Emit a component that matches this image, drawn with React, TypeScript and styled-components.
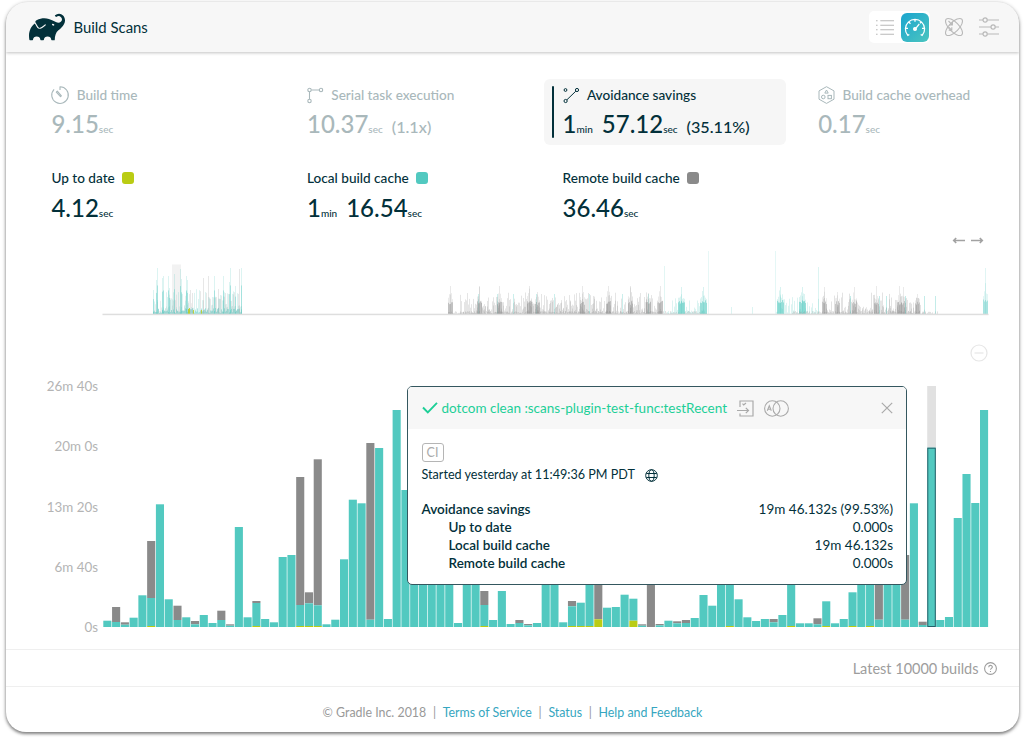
import React from 'react';
import styled, { createGlobalStyle, css } from 'styled-components';
import { SiGradle } from 'react-icons/si';

const ink = '#02303a';
const teal = '#52c9c0';
const grey = '#8a8a8a';
const lime = '#bacc14';

const Global = createGlobalStyle`
  * { box-sizing: border-box; }
  body { margin: 0; background: #fff; font-family: Lato, "Liberation Sans", sans-serif; color: ${ink}; }
`;

const Page = styled.div`
  width: 1024px;
  height: 740px;
  padding: 2px 5px 8px 6px;
  overflow: hidden;
`;
const Card = styled.div`
  height: 730px;
  display: flex;
  flex-direction: column;
  border-radius: 22px 22px 20px 20px;
  background: #fff;
  overflow: hidden;
  box-shadow: 0 2px 3px rgba(0, 0, 0, 0.35), 0 1px 4px rgba(0, 0, 0, 0.3);
`;
const Header = styled.header`
  height: 50px;
  flex: none;
  display: flex;
  align-items: center;
  padding: 0 20.5px 0 23px;
  background: #f7f7f7;
  box-shadow: 0 1px 3px rgba(0, 0, 0, 0.24);
`;
const Title = styled.h1`
  margin: 0 auto 0 8.5px;
  font-size: 14.9px;
  line-height: 20px;
  font-weight: 400;
`;
const ViewSwitch = styled.div`
  display: flex;
  align-items: center;
  gap: 6px;
  height: 32px;
  padding: 0 1px 0 6px;
  border-radius: 5px;
  background: #fff;
  margin-right: 14px;
`;
const ActiveView = styled.div`
  width: 28px;
  height: 29px;
  display: grid;
  place-items: center;
  border-radius: 6px;
  background: linear-gradient(135deg, #1ba5cf, #4cc5bf);
`;
const Tools = styled.div`
  display: flex;
  align-items: center;
  gap: 15px;
`;
const Line = styled.svg`
  display: block;
  flex: none;
  fill: none;
  stroke: currentColor;
  overflow: visible;
`;

const Stats = styled.section<{ $breakdown?: boolean }>`
  flex: none;
  display: grid;
  grid-template-columns: repeat(4, 242px);
  column-gap: 13.6px;
  padding: ${p => (p.$breakdown ? 17 : 27)}px 0 0 27px;
`;
const Stat = styled.div<{ $tone: 'muted' | 'selected' | 'plain' }>`
  position: relative;
  height: ${p => (p.$tone === 'plain' ? 60 : 66)}px;
  padding: 6px 0 0 18.4px;
  border-radius: 6px;
  color: ${p => (p.$tone === 'muted' ? '#a9b8bb' : ink)};
  ${p => p.$tone === 'selected' && css`
    background: #f6f6f6;
    &::before {
      content: '';
      position: absolute;
      left: 7.5px;
      top: 7px;
      width: 2px;
      height: 52px;
      border-radius: 1px;
      background: ${ink};
    }
  `}
`;
const StatLabel = styled.div`
  display: flex;
  align-items: center;
  gap: 7.3px;
  height: 20px;
  font-size: 13.6px;
  font-weight: 500;
  line-height: 20px;
  white-space: nowrap;
`;
const Swatch = styled.i<{ $color: string }>`
  width: 12px;
  height: 12px;
  border-radius: 3px;
  background: ${p => p.$color};
`;
const StatValue = styled.div<{ $low?: boolean }>`
  display: flex;
  align-items: baseline;
  margin-top: ${p => (p.$low ? 6 : 5)}px;
  font-size: 24px;
  font-weight: 500;
  line-height: 28px;
  white-space: nowrap;
`;
const Unit = styled.span`
  font-size: 10px;
  margin-right: 9px;
`;
const Ratio = styled.span`
  font-size: 16.2px;
`;

const Overview = styled.section`
  flex: none;
  height: 164px;
  padding: 15px 30px 0 96px;
  display: flex;
  flex-direction: column;
`;
const OverviewNav = styled.div`
  display: flex;
  justify-content: flex-end;
  gap: 6px;
  padding: 0 6px 6px 0;
  color: #a2a2a2;
`;
const Collapse = styled.div`
  display: flex;
  justify-content: flex-end;
  padding: 28px 1px 0 0;
  color: #e6e6e6;
`;
const ChartArea = styled.section`
  position: relative;
  flex: none;
  display: flex;
  height: 263px;
`;
const Axis = styled.div`
  width: 92px;
  height: 261px;
  margin: -10px 5px 0 0;
  display: flex;
  flex-direction: column;
  justify-content: space-between;
  text-align: right;
  font-size: 13.4px;
  line-height: 20px;
  color: #b4b4b4;
`;
const Popup = styled.div`
  position: absolute;
  left: 401px;
  top: 0;
  width: 500px;
  height: 199px;
  border: 1.5px solid #34575f;
  border-radius: 5px;
  background: #fff;
  overflow: hidden;
`;
const PopupHead = styled.div`
  display: flex;
  align-items: center;
  height: 42px;
  padding: 0 13px 0 14px;
  background: #f7f7f7;
  color: #aaa;
`;
const BuildName = styled.span`
  margin: 0 9.5px 0 3.5px;
  font-size: 13.5px;
  line-height: 20px;
  color: #1dcf97;
  white-space: nowrap;
`;
const CloseSlot = styled.span`
  margin-left: auto;
`;
const PopupBody = styled.div`
  padding: 14px 13px 0 13.5px;
`;
const Tag = styled.div`
  width: 22px;
  height: 19px;
  border: 1.3px solid #b5b5b5;
  border-radius: 3px;
  font-size: 12.5px;
  line-height: 17px;
  text-align: center;
  color: #aaa;
`;
const Started = styled.div`
  display: flex;
  align-items: center;
  gap: 10px;
  margin-top: 3px;
  font-size: 12.6px;
  line-height: 20px;
`;
const Detail = styled.div<{ $child?: boolean }>`
  display: flex;
  justify-content: space-between;
  padding-left: ${p => (p.$child ? 27 : 0)}px;
  font-size: 13.5px;
  line-height: 18px;
`;
const Details = styled.div`
  padding-top: 15px;
`;
const DetailName = styled.span`
  font-weight: 600;
`;
const Latest = styled.div`
  flex: none;
  display: flex;
  align-items: center;
  justify-content: flex-end;
  gap: 5px;
  height: 38px;
  padding-right: 22.5px;
  border-top: 1.5px solid #efefef;
  border-bottom: 1.5px solid #efefef;
  font-size: 14.5px;
  color: #9d9d9d;
`;
const Footer = styled.footer`
  display: flex;
  align-items: center;
  justify-content: center;
  gap: 6.7px;
  height: 40px;
  margin-top: 5px;
  font-size: 12.4px;
  color: #999;
`;
const FooterLink = styled.a`
  color: #36a6c0;
`;

/* Each build: [total, local + up-to-date, up-to-date], in pixels above the axis. */
type Build = [number, number?, number?];
const builds: Build[] = [
  [6.3], [20, 5], [4.7, 2.3], [9.3], [31.7], [86, 29, 1], [122.7], [27.7], [21.3, 7], [9.7],
  [6, 2.7], [12], [4], [16.3, 7], [2.7, 1.3], [100], [9.7], [26, 24, 1], [8], [4.7],
  [70], [72], [150, 22, 1], [34.7, 23.7, 1], [167.7, 21.7, 1], [2.7], [7.3], [67.7], [127.3], [123.7],
  [184, 7.3], [179], [8], [217], [137], [90], [90], [90], [90], [90],
  [4], [90], [90], [36, 22, 1], [7], [36], [3], [7, 4], [3, 1.7], [4],
  [80], [80], [4.7], [26, 20.7, 1], [24.3, 24.3, 1], [80, 80, 1], [80, 7.7, 7.7], [19.3], [20], [32.3],
  [28.3, 28.3, 6.3], [2.7, 1.3], [80, 0], [3, 1.7], [6.3], [5.7, 3.7], [7, 4], [9], [32], [21.3],
  [80], [80, 80, 1], [27.7], [9.7], [6], [8], [8, 4.7], [12], [80, 80, 1], [3.7],
  [3.7], [8.7, 2.7], [25.7, 25.7, 1], [3.7], [8], [34.7, 34.7, 1], [80], [80, 80, 1], [80, 7.3], [80],
  [80], [72, 7.3], [123.7], [5.3, 2], [179.3], [7], [10], [109], [153], [124], [217],
];
const pitch = 8.767;
const selectedIndex = 94;

function BuildChart() {
  return (
    <svg width="887" height="242" viewBox="0 0 887 242">
      {builds.map(([total, local = total, fresh = 0], i) => {
        const x = i * pitch + 0.3;
        const w = 8.1;
        return (
          <g key={i}>
            {i === selectedIndex && <rect x={x - 0.2} y="0" width="8.8" height="241" fill="#e1e1e1" />}
            <rect x={x} y={241 - total} width={w} height={total - local} fill={grey} />
            <rect x={x} y={241 - local} width={w} height={local - fresh} fill={teal} />
            <rect x={x} y={241 - fresh} width={w} height={fresh} fill={lime} />
            {i === selectedIndex && (
              <rect x={x + 0.4} y={241.5 - total} width={w - 0.6} height={total - 1} fill="none" stroke="#24616a" />
            )}
          </g>
        );
      })}
    </svg>
  );
}

/* Overview history. Offsets are measured from the left end of the axis. */
type Spike = [number, number, string, number];
const spikes: Spike[] = [];
const noise = (n: number) => {
  const v = Math.sin(n * 12.9898) * 43758.5453;
  return v - Math.floor(v);
};
const fill = (from: number, to: number, min: number, max: number, color: string, alpha: number, power = 2) => {
  for (let x = from; x < to; x += 1) {
    spikes.push([x, min + (max - min) * Math.pow(noise(x + max), power), color, alpha]);
  }
};
const peak = (center: number, half: number, low: number, high: number, color: string, alpha: number) => {
  for (let x = center - half; x <= center + half; x += 1) {
    spikes.push([x, low * (0.7 + 0.3 * noise(x)), color, alpha]);
    spikes.push([x, low + (high - low) * noise(x + 3) * (1 - Math.abs(x - center) / (half + 1)), color, alpha * 0.4]);
  }
  spikes.push([center, high, color, alpha * 0.45]);
};
fill(51, 140, 1, 6, teal, 0.45, 1);
fill(51, 92, 3, 22, '#999', 0.17);
fill(98, 140, 2, 24, '#999', 0.22);
fill(51, 140, 1, 25, teal, 0.2);
([[51, 24], [54, 34], [55, 46], [60, 36], [61, 38], [66, 38], [67, 26], [72, 40], [78, 45], [79, 35], [84, 38], [85, 34],
  [112, 38], [121, 38], [127, 32], [128, 46], [133, 28], [139, 46]] as number[][]).forEach(([x, h]) => {
  spikes.push([x, h, teal, 0.2], [x, h * 0.62, teal, 0.4]);
});
([[88, 24], [90, 21], [101, 36], [106, 38], [116, 25], [137, 45]] as number[][]).forEach(([x, h]) => spikes.push([x, h, '#999', 0.24]));
([[86, 5], [87, 6], [91, 4], [99, 4]] as number[][]).forEach(([x, h]) => spikes.push([x, h, lime, 0.8]));
fill(358, 560, 0, 22, '#888', 0.22, 2);
fill(358, 560, 0, 16, '#888', 0.22, 2.4);
fill(346, 605, 0, 3, '#888', 0.25, 1);
[376, 395, 411, 434, 452, 487, 520, 546].forEach(x => spikes.push([x, 20, teal, 0.3]));
[[348, 28], [377, 28], [397, 28], [427, 28], [435, 22], [480, 28], [506, 28], [528, 28], [546, 21], [558, 28]].forEach(
  ([x, h]) => peak(x, 2, 13, h, '#888', 0.42),
);
peak(579, 3, 14, 27, teal, 0.5);
peak(601, 3, 14, 27, teal, 0.5);
fill(565, 605, 0, 16, teal, 0.2);
fill(674, 717, 0, 18, teal, 0.2);
peak(678, 3, 14, 27, teal, 0.5);
peak(700, 3, 14, 27, teal, 0.5);
spikes.push([562, 48, teal, 0.17], [606, 63, teal, 0.14], [629, 7, teal, 0.2], [650, 7, teal, 0.2], [673, 63, teal, 0.15], [716, 47, teal, 0.2]);
fill(690, 836, 0, 3, '#888', 0.25, 1);
fill(721, 824, 0, 22, '#888', 0.24, 2);
fill(740, 815, 0, 15, '#888', 0.2, 1.6);
[[722, 27], [735, 22], [752, 27], [774, 28], [797, 28], [801, 27], [815, 20]].forEach(([x, h]) => peak(x, 2, 13, h, '#888', 0.38));
[748, 777, 784, 803, 822, 833].forEach(x => spikes.push([x, 18, teal, 0.35]));
peak(883, 2, 17, 46, teal, 0.4);

function OverviewChart() {
  return (
    <svg width="887" height="66" viewBox="0 0 887 66">
      <rect x="70" y="14.500" width="9" height="49.500" fill="#f2f2f2" />
      {spikes.map(([x, h, color, alpha], i) => (
        <rect key={i} x={x} y={64 - h} width="1" height={h} fill={color} opacity={alpha} />
      ))}
      <rect x="0.500" y="63.700" width="886" height="1.500" fill="#dedede" />
    </svg>
  );
}

const BuildTimeIcon = () => (
  <Line width="18" height="18" viewBox="0 0 18 18" strokeWidth="1.1">
    <path d="M9 4V.8A8.3 8.3 0 1 1 3.1 3.3M5.3 6.1l1-1 4.1 4.7-.9.8z" strokeLinejoin="round" />
  </Line>
);
const SerialIcon = () => (
  <Line width="17" height="17" viewBox="0 0 17 17" strokeWidth="1.1">
    <circle cx="2.5" cy="3" r="1.7" /><circle cx="14" cy="3" r="1.7" /><circle cx="2.5" cy="14" r="1.7" />
    <path d="M4.2 3h8.1M2.5 4.7v7.6" />
  </Line>
);
const SavingsIcon = () => (
  <Line width="17" height="17" viewBox="0 0 17 17" strokeWidth="1">
    <circle cx="2.5" cy="3" r="1.4" /><circle cx="14" cy="3" r="1.6" /><circle cx="2.6" cy="14" r="1.6" />
    <path d="M3.9 12.800 12.800 4.200" />
  </Line>
);
const OverheadIcon = () => (
  <Line width="17" height="18" viewBox="0 0 17 18" strokeWidth="1">
    <path d="M8.5.7 16 4.9v8.3l-7.5 4.2L1 13.2V4.9zM8.5 4l1.7 3.1H6.8z" />
    <circle cx="5.3" cy="11" r="1.8" /><rect x="10" y="9.4" width="3.4" height="3.3" />
  </Line>
);
const ToolIcon = styled(Line)`
  color: #b9b9b9;
`;
const ListIcon = () => (
  <ToolIcon width="20" height="17" viewBox="0 0 20 17" strokeWidth="1.1">
    <path d="M1 1.8h1.6M5.3 1.8H19M1 6.2h1.6M5.3 6.2H19M1 10.7h1.6M5.3 10.7H19M1 15.2h1.6M5.3 15.2H19" />
  </ToolIcon>
);
const WhiteIcon = styled(Line)`
  color: #fff;
`;
const GaugeIcon = () => (
  <WhiteIcon width="22" height="20" viewBox="0 0 22 20" strokeWidth="1.25">
    <path d="M5.3 17.4 3.8 18.4A9.6 9.6 0 1 1 18.2 18.4L16.7 17.4M11 2.4v2.3M5 5.2l1.5 1.5M1.9 11.4H4M20.1 11.4H18M17 5.2l-1 1M12.2 10.8 15.3 7" />
    <circle cx="11" cy="12" r="1.4" fill="currentColor" />
  </WhiteIcon>
);
const AtomIcon = () => (
  <ToolIcon width="20" height="20" viewBox="0 0 20 20" strokeWidth="1.1">
    <ellipse cx="10" cy="10" rx="11" ry="4.8" transform="rotate(45 10 10)" />
    <ellipse cx="10" cy="10" rx="11" ry="4.8" transform="rotate(-45 10 10)" />
    <path d="m4.5 4 3.8 3.8M8.4 4.8v3.1H5.3M4.7 10.2l3 3M7.8 10.2v3.1H4.7" />
  </ToolIcon>
);
const SlidersIcon = () => (
  <ToolIcon width="20" height="20" viewBox="0 0 20 20" strokeWidth="1.2">
    <path d="M0 3h4M8.2 3H20M0 10h12M16.2 10H20M0 17h4M8.2 17H20" />
    <circle cx="6.1" cy="3" r="2.1" /><circle cx="14.1" cy="10" r="2.1" /><circle cx="6.1" cy="17" r="2.1" />
  </ToolIcon>
);
const Arrow = ({ flip }: { flip?: boolean }) => (
  <Line width="12" height="7" viewBox="0 0 12 7" strokeWidth="1.6">
    <path d={flip ? 'M0 3.5h11M8.8 1l2.500 2.500-2.500 2.500' : 'M12 3.500H1M3.200 1 .7 3.500l2.500 2.500'} />
  </Line>
);
const CheckIcon = styled(Line)`
  color: #1dcf97;
`;

export default function App() {
  return (
    <>
      <Global />
      <Page>
        <Card>
          <Header>
            <SiGradle size={36} color={ink} />
            <Title>Build Scans</Title>
            <ViewSwitch>
              <ListIcon />
              <ActiveView><GaugeIcon /></ActiveView>
            </ViewSwitch>
            <Tools><AtomIcon /><SlidersIcon /></Tools>
          </Header>

          <Stats>
            <Stat $tone="muted">
              <StatLabel><BuildTimeIcon />Build time</StatLabel>
              <StatValue>9.15<Unit>sec</Unit></StatValue>
            </Stat>
            <Stat $tone="muted">
              <StatLabel><SerialIcon />Serial task execution</StatLabel>
              <StatValue>10.37<Unit>sec</Unit><Ratio>(1.1x)</Ratio></StatValue>
            </Stat>
            <Stat $tone="selected">
              <StatLabel><SavingsIcon />Avoidance savings</StatLabel>
              <StatValue>1<Unit>min</Unit>57.12<Unit>sec</Unit><Ratio>(35.11%)</Ratio></StatValue>
            </Stat>
            <Stat $tone="muted">
              <StatLabel><OverheadIcon />Build cache overhead</StatLabel>
              <StatValue>0.17<Unit>sec</Unit></StatValue>
            </Stat>
          </Stats>
          <Stats $breakdown>
            <Stat $tone="plain">
              <StatLabel>Up to date<Swatch $color={lime} /></StatLabel>
              <StatValue $low>4.12<Unit>sec</Unit></StatValue>
            </Stat>
            <Stat $tone="plain">
              <StatLabel>Local build cache<Swatch $color={teal} /></StatLabel>
              <StatValue $low>1<Unit>min</Unit>16.54<Unit>sec</Unit></StatValue>
            </Stat>
            <Stat $tone="plain">
              <StatLabel>Remote build cache<Swatch $color={grey} /></StatLabel>
              <StatValue $low>36.46<Unit>sec</Unit></StatValue>
            </Stat>
          </Stats>

          <Overview>
            <OverviewNav><Arrow /><Arrow flip /></OverviewNav>
            <OverviewChart />
            <Collapse>
              <Line width="18" height="18" viewBox="0 0 18 18" strokeWidth="1.2">
                <circle cx="9" cy="9" r="8" /><path d="M4.5 9h9" />
              </Line>
            </Collapse>
          </Overview>

          <ChartArea>
            <Axis>
              <span>26m 40s</span><span>20m 0s</span><span>13m 20s</span><span>6m 40s</span><span>0s</span>
            </Axis>
            <BuildChart />
            <Popup>
              <PopupHead>
                <CheckIcon width="16" height="12" viewBox="0 0 16 12" strokeWidth="1.9">
                  <path d="m1 5.5 4.8 5L15 .9" />
                </CheckIcon>
                <BuildName>dotcom clean :scans-plugin-test-func:testRecent</BuildName>
                <Line width="27" height="17" viewBox="0 0 27 17" strokeWidth="1.2">
                  <path d="M3 7V1h13v15H3v-2.5M0 10.5h11.5M8.8 7.8l2.7 2.7-2.7 2.7M5.5 3.7l1.2 1.2L9 3" />
                </Line>
                <Line width="25" height="17" viewBox="0 0 25 17" strokeWidth="1.1">
                  <circle cx="8.3" cy="8.5" r="7.7" /><circle cx="16.7" cy="8.5" r="7.7" />
                  <path d="m3.3 10.8 2-5 2 5M4 9.2h2.7" />
                </Line>
                <CloseSlot>
                  <Line width="12" height="12" viewBox="0 0 12 12" strokeWidth="1.2"><path d="m.8.8 10.4 10.4M11.2.8.8 11.2" /></Line>
                </CloseSlot>
              </PopupHead>
              <PopupBody>
                <Tag>CI</Tag>
                <Started>
                  Started yesterday at 11:49:36 PM PDT
                  <Line width="13" height="13" viewBox="0 0 13 13" strokeWidth="1">
                    <circle cx="6.5" cy="6.5" r="5.8" /><ellipse cx="6.5" cy="6.5" rx="2.7" ry="5.8" /><path d="M1.3 4.5h10.4M1.3 8.5h10.4" />
                  </Line>
                </Started>
                <Details>
                  <Detail><DetailName>Avoidance savings</DetailName><span>19m 46.132s (99.53%)</span></Detail>
                  <Detail $child><DetailName>Up to date</DetailName><span>0.000s</span></Detail>
                  <Detail $child><DetailName>Local build cache</DetailName><span>19m 46.132s</span></Detail>
                  <Detail $child><DetailName>Remote build cache</DetailName><span>0.000s</span></Detail>
                </Details>
              </PopupBody>
            </Popup>
          </ChartArea>

          <Latest>
            Latest 10000 builds
            <Line width="13" height="13" viewBox="0 0 13 13" strokeWidth="1.1">
              <circle cx="6.5" cy="6.5" r="5.9" />
              <path d="M4.7 5.2c.1-2.500 3.700-2.300 3.600-.1-.1 1.300-1.800 1.300-1.800 2.700M6.500 8.900v1.200" />
            </Line>
          </Latest>
          <Footer>
            <span>© Gradle Inc. 2018</span><span>|</span>
            <FooterLink>Terms of Service</FooterLink><span>|</span>
            <FooterLink>Status</FooterLink><span>|</span>
            <FooterLink>Help and Feedback</FooterLink>
          </Footer>
        </Card>
      </Page>
    </>
  );
}
